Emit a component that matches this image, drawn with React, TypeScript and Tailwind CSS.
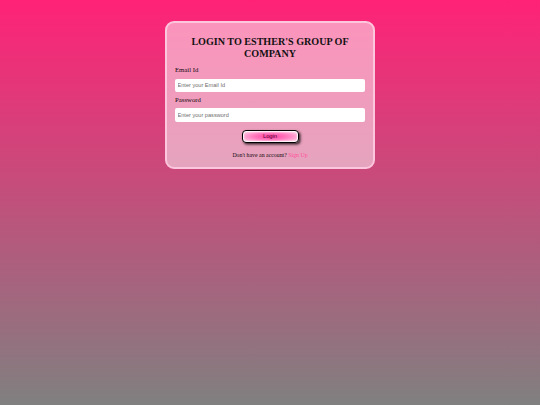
export default function App() {
  return (
    <div
      className="min-h-[405px] w-full flex justify-center pt-[21px] bg-[linear-gradient(to_bottom,#ff2277,#808080)]"
      style={{ fontFamily: '"Liberation Serif", "Times New Roman", serif' }}
    >
      <div className="w-[210px] h-[148px] border-2 border-[#fcc6dd] rounded-[9px] bg-white/50 px-2 pt-[12.5px]">
        <h2 className="text-[10.1px] leading-[12px] font-bold text-center text-[#111] uppercase">
          Login to Esther's Group of
          <br />
          Company
        </h2>

        <form className="flex flex-col" onSubmit={(e) => e.preventDefault()}>
          <label className="mt-[6.4px] text-[6.75px] leading-[7.76px] text-[#140810]">Email Id</label>
          <input
            type="email"
            placeholder="Enter your Email Id"
            className="mt-[5px] h-[13.5px] w-full bg-white rounded-[2px] px-[2.5px] text-[5.6px] outline-none placeholder:text-[#6e6e6e]"
            style={{ fontFamily: '"Liberation Sans", Arial, sans-serif' }}
          />
          <label className="mt-[3.7px] text-[6.75px] leading-[7.76px] text-[#140810]">Password</label>
          <input
            type="password"
            placeholder="Enter your password"
            className="mt-[4.5px] h-[13.5px] w-full bg-white rounded-[2px] px-[2.5px] text-[5.6px] outline-none placeholder:text-[#6e6e6e]"
            style={{ fontFamily: '"Liberation Sans", Arial, sans-serif' }}
          />
          <button
            type="submit"
            className="mx-auto mt-[8px] w-[57px] h-[13.3px] rounded-[4px] border-[1.5px] border-black text-[5.8px] text-[#4a0634] bg-[radial-gradient(ellipse_at_center,#ff3d9e_0%,#ff7cbf_45%,#ffe6f2_100%)] shadow-[1.5px_1.5px_2.5px_rgba(0,0,0,0.75),inset_0_0_1.5px_1px_#fff]"
            style={{ fontFamily: '"Liberation Sans", Arial, sans-serif' }}
          >
            Login
          </button>
          <p className="mt-[9.5px] text-center text-[5.85px] leading-[7px] text-[#140810]">
            Don't have an account? <a className="text-[#ff4f9c] cursor-pointer">Sign Up</a>
          </p>
        </form>
      </div>
    </div>
  );
}
